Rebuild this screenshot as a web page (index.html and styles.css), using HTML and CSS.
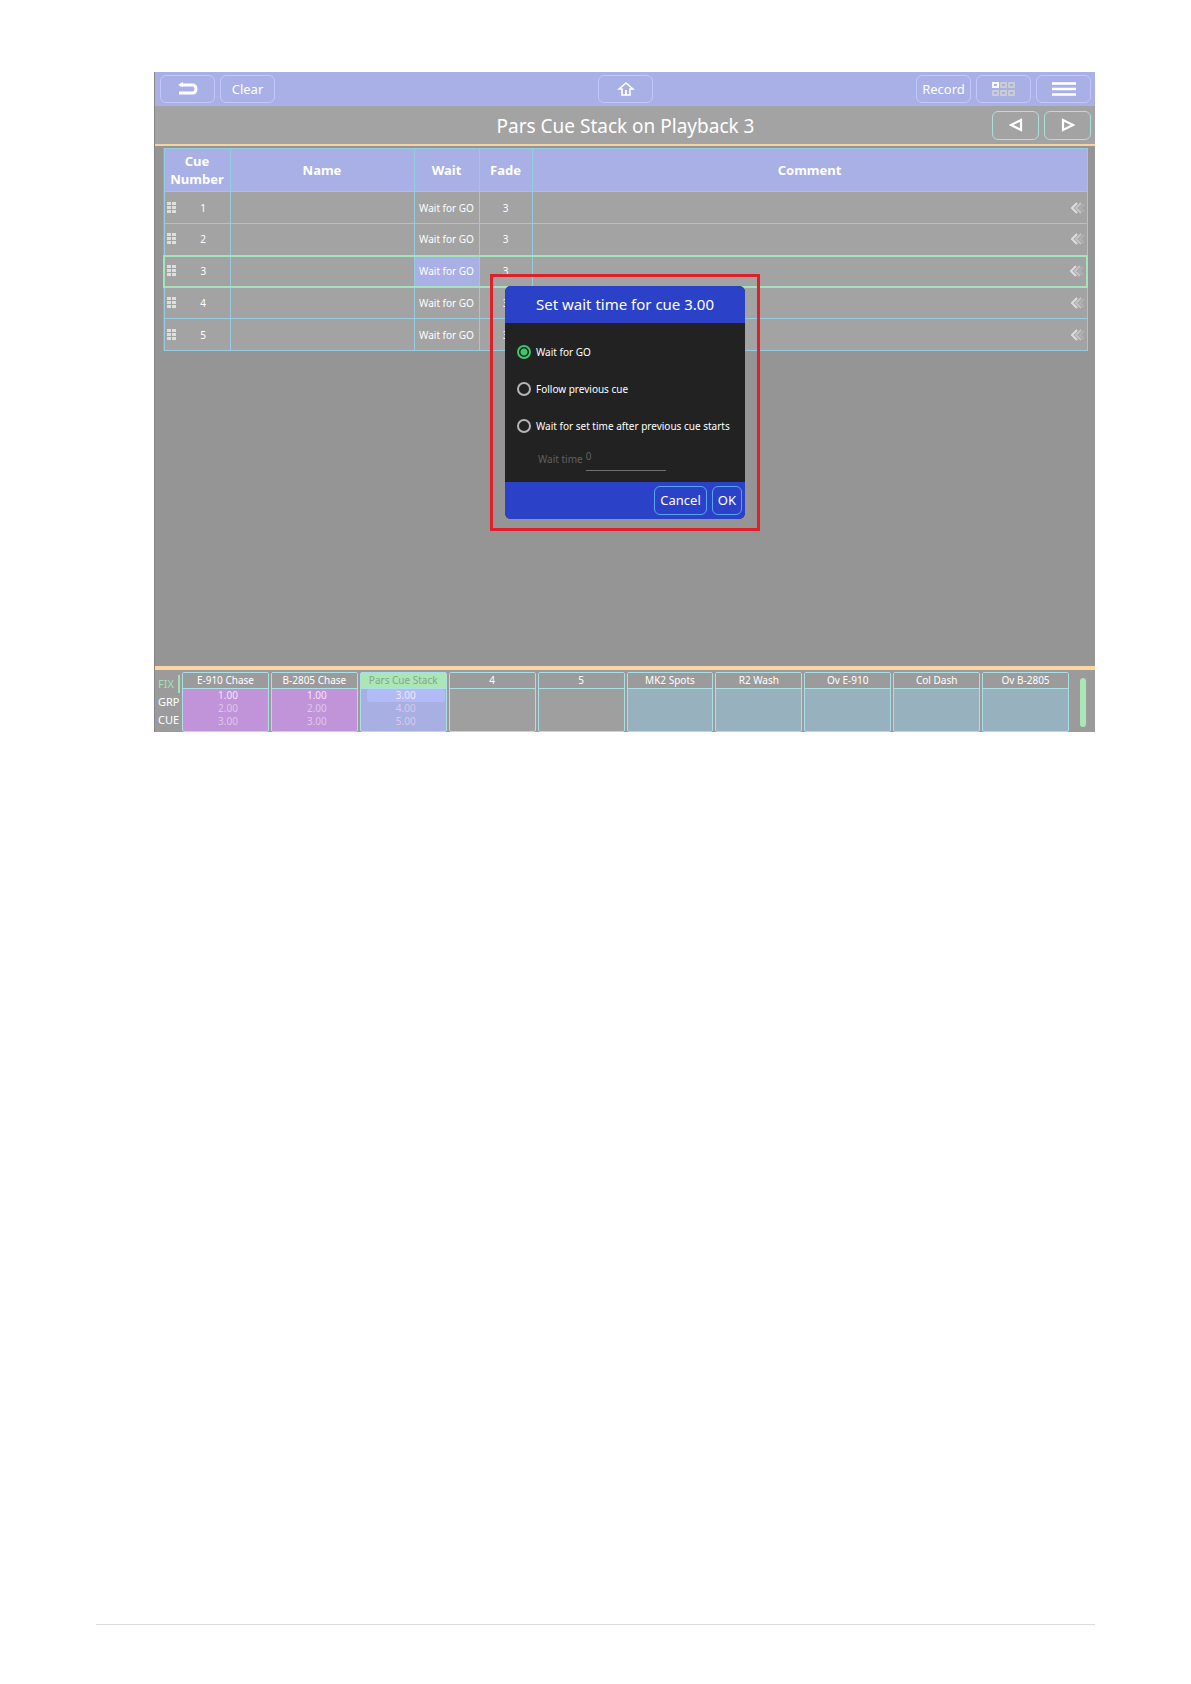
FILE: index.html
```html
<!DOCTYPE html>
<html lang="en">
<head>
	<meta charset="UTF-8">
	<title>Set wait time</title>
	<link rel="stylesheet" href="styles.css">
</head>
<body>
	<!-- icons used more than once -->
	<svg class="defs" width="0" height="0">
		<symbol id="grip" viewBox="0 0 10 14">
			<path d="M0 1h4v3H0zM5 1h4v3H5zM0 5h4v3H0zM5 5h4v3H5zM0 9h4v3H0zM5 9h4v3H5z" fill="#dedede"/>
		</symbol>
		<symbol id="swipe" viewBox="0 0 16 12">
			<g fill="none" stroke-width="2">
				<path d="M14 2l-4 4 4 4" stroke="#b0b0b0"/>
				<path d="M11 1L6 6l5 5" stroke="#c4c4c4"/>
				<path d="M7 1L2 6l5 5" stroke="#dedede"/>
			</g>
		</symbol>
	</svg>
	<div class="page">
		<main class="screen">
			<header class="topbar">
				<div class="group">
					<button class="btn" aria-label="Back">
						<svg width="20" height="16" viewBox="0 0 20 16"><path d="M2 4h12q4 0 4 4t-4 4H1" fill="none" stroke="#fff" stroke-width="3"/><path d="M0 4l5-3v5z" fill="#fff"/></svg>
					</button>
					<button class="btn">Clear</button>
				</div>
				<button class="btn" aria-label="Home">
					<svg width="18" height="16" viewBox="0 0 18 16"><path d="M2 8l7-6 7 6h-3v6H5V8z" fill="none" stroke="#fff" stroke-width="1.6"/><path d="M8 9h2v5H8z" fill="#fff"/></svg>
				</button>
				<div class="group right">
					<button class="btn">Record</button>
					<button class="btn" aria-label="Windows">
						<svg width="26" height="16" viewBox="0 0 26 16"><g fill="none" stroke="#cccdd2" stroke-width="1.8"><path d="M10 2h5v4h-5zM18 2h5v4h-5zM2 10h5v4H2zM10 10h5v4h-5zM18 10h5v4h-5z"/><path d="M2 2h5v4H2z" stroke="#fff"/></g></svg>
					</button>
					<button class="btn" aria-label="Menu">
						<svg width="24" height="16" viewBox="0 0 24 16"><path d="M0 2.500h24M0 8h24M0 13.500h24" stroke="#fff" stroke-width="2.600"/></svg>
					</button>
				</div>
			</header>
			<div class="titlebar">
				<h1>Pars Cue Stack on Playback 3</h1>
				<div class="nav">
					<button class="btn" aria-label="Previous">
						<svg width="14" height="14" viewBox="0 0 14 14"><path d="M12 2v10L2 7z" fill="none" stroke="#fff" stroke-width="2.200"/></svg>
					</button>
					<button class="btn" aria-label="Next">
						<svg width="14" height="14" viewBox="0 0 14 14"><path d="M2 2v10l10-5z" fill="none" stroke="#fff" stroke-width="2.200"/></svg>
					</button>
				</div>
			</div>
			<div class="work">
				<table class="cues">
					<thead>
						<tr><th class="c-num">Cue Number</th><th class="c-name">Name</th><th class="c-wait">Wait</th><th class="c-fade">Fade</th><th>Comment</th></tr>
					</thead>
					<tbody>
						<tr><td><div class="num"><svg width="10" height="14"><use href="#grip"/></svg><span>1</span></div></td><td></td><td>Wait for GO</td><td>3</td><td class="comment"><svg width="16" height="12"><use href="#swipe"/></svg></td></tr>
						<tr><td><div class="num"><svg width="10" height="14"><use href="#grip"/></svg><span>2</span></div></td><td></td><td>Wait for GO</td><td>3</td><td class="comment"><svg width="16" height="12"><use href="#swipe"/></svg></td></tr>
						<tr class="current"><td><div class="num"><svg width="10" height="14"><use href="#grip"/></svg><span>3</span></div></td><td></td><td class="picked">Wait for GO</td><td>3</td><td class="comment"><svg width="16" height="12"><use href="#swipe"/></svg></td></tr>
						<tr><td><div class="num"><svg width="10" height="14"><use href="#grip"/></svg><span>4</span></div></td><td></td><td>Wait for GO</td><td>3</td><td class="comment"><svg width="16" height="12"><use href="#swipe"/></svg></td></tr>
						<tr><td><div class="num"><svg width="10" height="14"><use href="#grip"/></svg><span>5</span></div></td><td></td><td>Wait for GO</td><td>3</td><td class="comment"><svg width="16" height="12"><use href="#swipe"/></svg></td></tr>
					</tbody>
				</table>
			</div>
			<footer class="playbacks">
				<div class="modes">
					<span class="on">FIX</span>
					<span>GRP</span>
					<span>CUE</span>
				</div>
				<div class="pads">
					<section class="pad chase"><h2>E-910 Chase</h2><ul><li>1.00</li><li>2.00</li><li>3.00</li></ul></section>
					<section class="pad chase"><h2>B-2805 Chase</h2><ul><li>1.00</li><li>2.00</li><li>3.00</li></ul></section>
					<section class="pad stack"><h2>Pars Cue Stack</h2><ul><li>3.00</li><li>4.00</li><li>5.00</li></ul></section>
					<section class="pad"><h2>4</h2></section>
					<section class="pad"><h2>5</h2></section>
					<section class="pad over"><h2>MK2 Spots</h2></section>
					<section class="pad over"><h2>R2 Wash</h2></section>
					<section class="pad over"><h2>Ov E-910</h2></section>
					<section class="pad over"><h2>Col Dash</h2></section>
					<section class="pad over"><h2>Ov B-2805</h2></section>
				</div>
				<div class="level"></div>
			</footer>

			<div class="overlay">
				<div class="frame">
					<form class="dialog">
						<h2>Set wait time for cue 3.00</h2>
						<div class="options">
							<label><input type="radio" name="wait" checked>Wait for GO</label>
							<label><input type="radio" name="wait">Follow previous cue</label>
							<label><input type="radio" name="wait">Wait for set time after previous cue starts</label>
							<div class="time">
								<label for="time">Wait time</label>
								<input id="time" type="text" value="0" disabled>
							</div>
						</div>
						<div class="actions">
							<button type="button">Cancel</button>
							<button type="button">OK</button>
						</div>
					</form>
				</div>
			</div>
		</main>
		<hr class="rule">
	</div>
</body>
</html>
```
FILE: styles.css
```css
*{
	box-sizing: border-box;
}
body,h1,h2,ul{
	margin: 0;padding: 0;
}
body{
	font-family: "Noto Sans", "Open Sans", sans-serif;
	font-size: 13px;color: #fff;background: #fff;
}
button,input{
	font: inherit;color: inherit;
}
svg{
	display: block;flex: none;
}
.defs{
	position: absolute;
}
.page{
	min-height: 100vh;padding: 72px 96px 59px;
	display: flex;flex-direction: column;
}
.screen{
	position: relative;margin-left: 58px;
	background: #959595;border-left: 1px solid #858585;
}

/* top bar */
.topbar{
	display: grid;grid-template-columns: 1fr auto 1fr;align-items: center;
	height: 34px;padding: 0 4px 0 5px;background: #a9b0e5;
}
.group,.nav{
	display: flex;gap: 5px;
}
.right{
	justify-content: flex-end;
}
.btn{
	display: flex;align-items: center;justify-content: center;
	width: 55px;height: 28px;padding: 0;
	background: none;border: 1px solid #c3c8fa;border-radius: 6px;
}
.titlebar{
	display: grid;grid-template-columns: 1fr auto 1fr;align-items: center;
	height: 40px;padding: 0 4px 0 5px;
	background: #a3a3a3;border-bottom: 2px solid #f5d3a5;
}
.titlebar h1{
	grid-column: 2;padding-top: 2px;font-size: 19px;line-height: 28px;font-weight: 400;
}
.nav{
	justify-content: flex-end;
}
.nav .btn{
	width: 47px;height: 29px;border-color: #ade0dc;
}

/* cue list */
.work{
	min-height: 520px;padding: 2px 7px 0 8px;
}
.cues{
	width: 100%;table-layout: fixed;border-collapse: collapse;
	background: #a3a3a3;text-align: center;
}
.cues th,.cues td{
	height: 32px;padding: 0;border: 1px solid #95cde0;
}
.cues th{
	height: 43px;font-size: 13px;line-height: 18px;background: #a9b0e5;
}
.cues td{
	font-size: 10px;line-height: 16px;
}
.c-num{
	width: 66px;
}
.c-name{
	width: 184px;
}
.c-wait{
	width: 65px;
}
.c-fade{
	width: 53px;
}
.num{
	display: flex;align-items: center;padding-left: 2px;
}
.num span{
	flex: 1;
}
.comment svg{
	margin: 0 1px 0 auto;
}
.cues .current{
	border: 2px solid #a5e3bf;
}
.cues .current td{
	height: 31px;
}
.picked{
	background: #a9b0e5;
}

/* playbacks */
.playbacks{
	display: flex;height: 66px;
	background: #9b9b9b;border-top: 4px solid #fcd5a4;
}
.modes{
	display: flex;flex-direction: column;
	width: 27px;padding: 5px 2px 0 3px;font-size: 11px;line-height: 18px;
}
.modes .on{
	color: #a5dfba;border-right: 2px solid #a5dfba;
}
.pads{
	flex: 1;display: grid;grid-template-columns: repeat(10, 1fr);gap: 2px;padding-top: 2px;
}
.pad{
	border: 1px solid #a9dfe5;border-radius: 2px;background: #9f9f9f;text-align: center;
}
.pad h2{
	font-size: 10px;line-height: 15px;font-weight: 400;
	background: #9b9b9b;border-bottom: 1px solid #a9dfe5;
}
.pad ul{
	list-style: none;padding: 0 1px 0 6px;font-size: 10px;line-height: 13px;color: #dcc8ec;
}
.pad li:first-child{
	color: #f3e6fa;
}
.chase{
	background: #c193d9;
}
.stack{
	background: #a7afe3;
}
.stack h2{
	color: #86a58f;background: #aae6b6;
}
.stack li:first-child{
	background: #b3bbf7;border-radius: 3px;
}
.over{
	background: #98b1be;
}
.level{
	width: 6px;margin: 8px 9px 5px 11px;border-radius: 3px;background: #aae6b6;
}

/* dialog */
.overlay{
	position: absolute;top: 0;right: 0;bottom: 0;left: 0;
	display: flex;align-items: center;justify-content: center;
}
.frame{
	padding: 9px 12px;border: 3px solid #df2029;
}
.dialog{
	width: 240px;overflow: hidden;border-radius: 6px;background: #222;
}
.dialog h2{
	font-size: 15px;line-height: 37px;font-weight: 400;text-align: center;background: #2b42c8;
}
.options{
	display: flex;flex-direction: column;height: 159px;padding: 11px 8px 0 12px;
	font-size: 10px;
}
.options > label{
	display: flex;align-items: center;gap: 5px;height: 37px;white-space: nowrap;
}
.options input[type=radio]{
	appearance: none;flex: none;width: 14px;height: 14px;margin: 0;
	border: 2px solid #b4b4b4;border-radius: 50%;
}
.options input[type=radio]:checked{
	border-color: #3fc66b;
	background: radial-gradient(circle, #3fc66b 3px, transparent 4px);
}
.time{
	display: flex;align-items: center;gap: 3px;padding: 2px 0 0 21px;color: #606060;
}
.time input{
	width: 80px;height: 24px;padding: 0 0 5px;
	background: none;border: 0;border-bottom: 1px solid #707070;
}
.actions{
	display: flex;justify-content: flex-end;gap: 5px;padding: 4px 3px 4px 4px;background: #2b42c8;
}
.actions button{
	height: 29px;padding: 0 5px;font-size: 13px;
	background: none;border: 1px solid #56a5ee;border-radius: 6px;
}

.rule{
	width: 100%;margin: auto 0 0;border: 0;border-top: 1px solid #dcdcdc;
}
```
